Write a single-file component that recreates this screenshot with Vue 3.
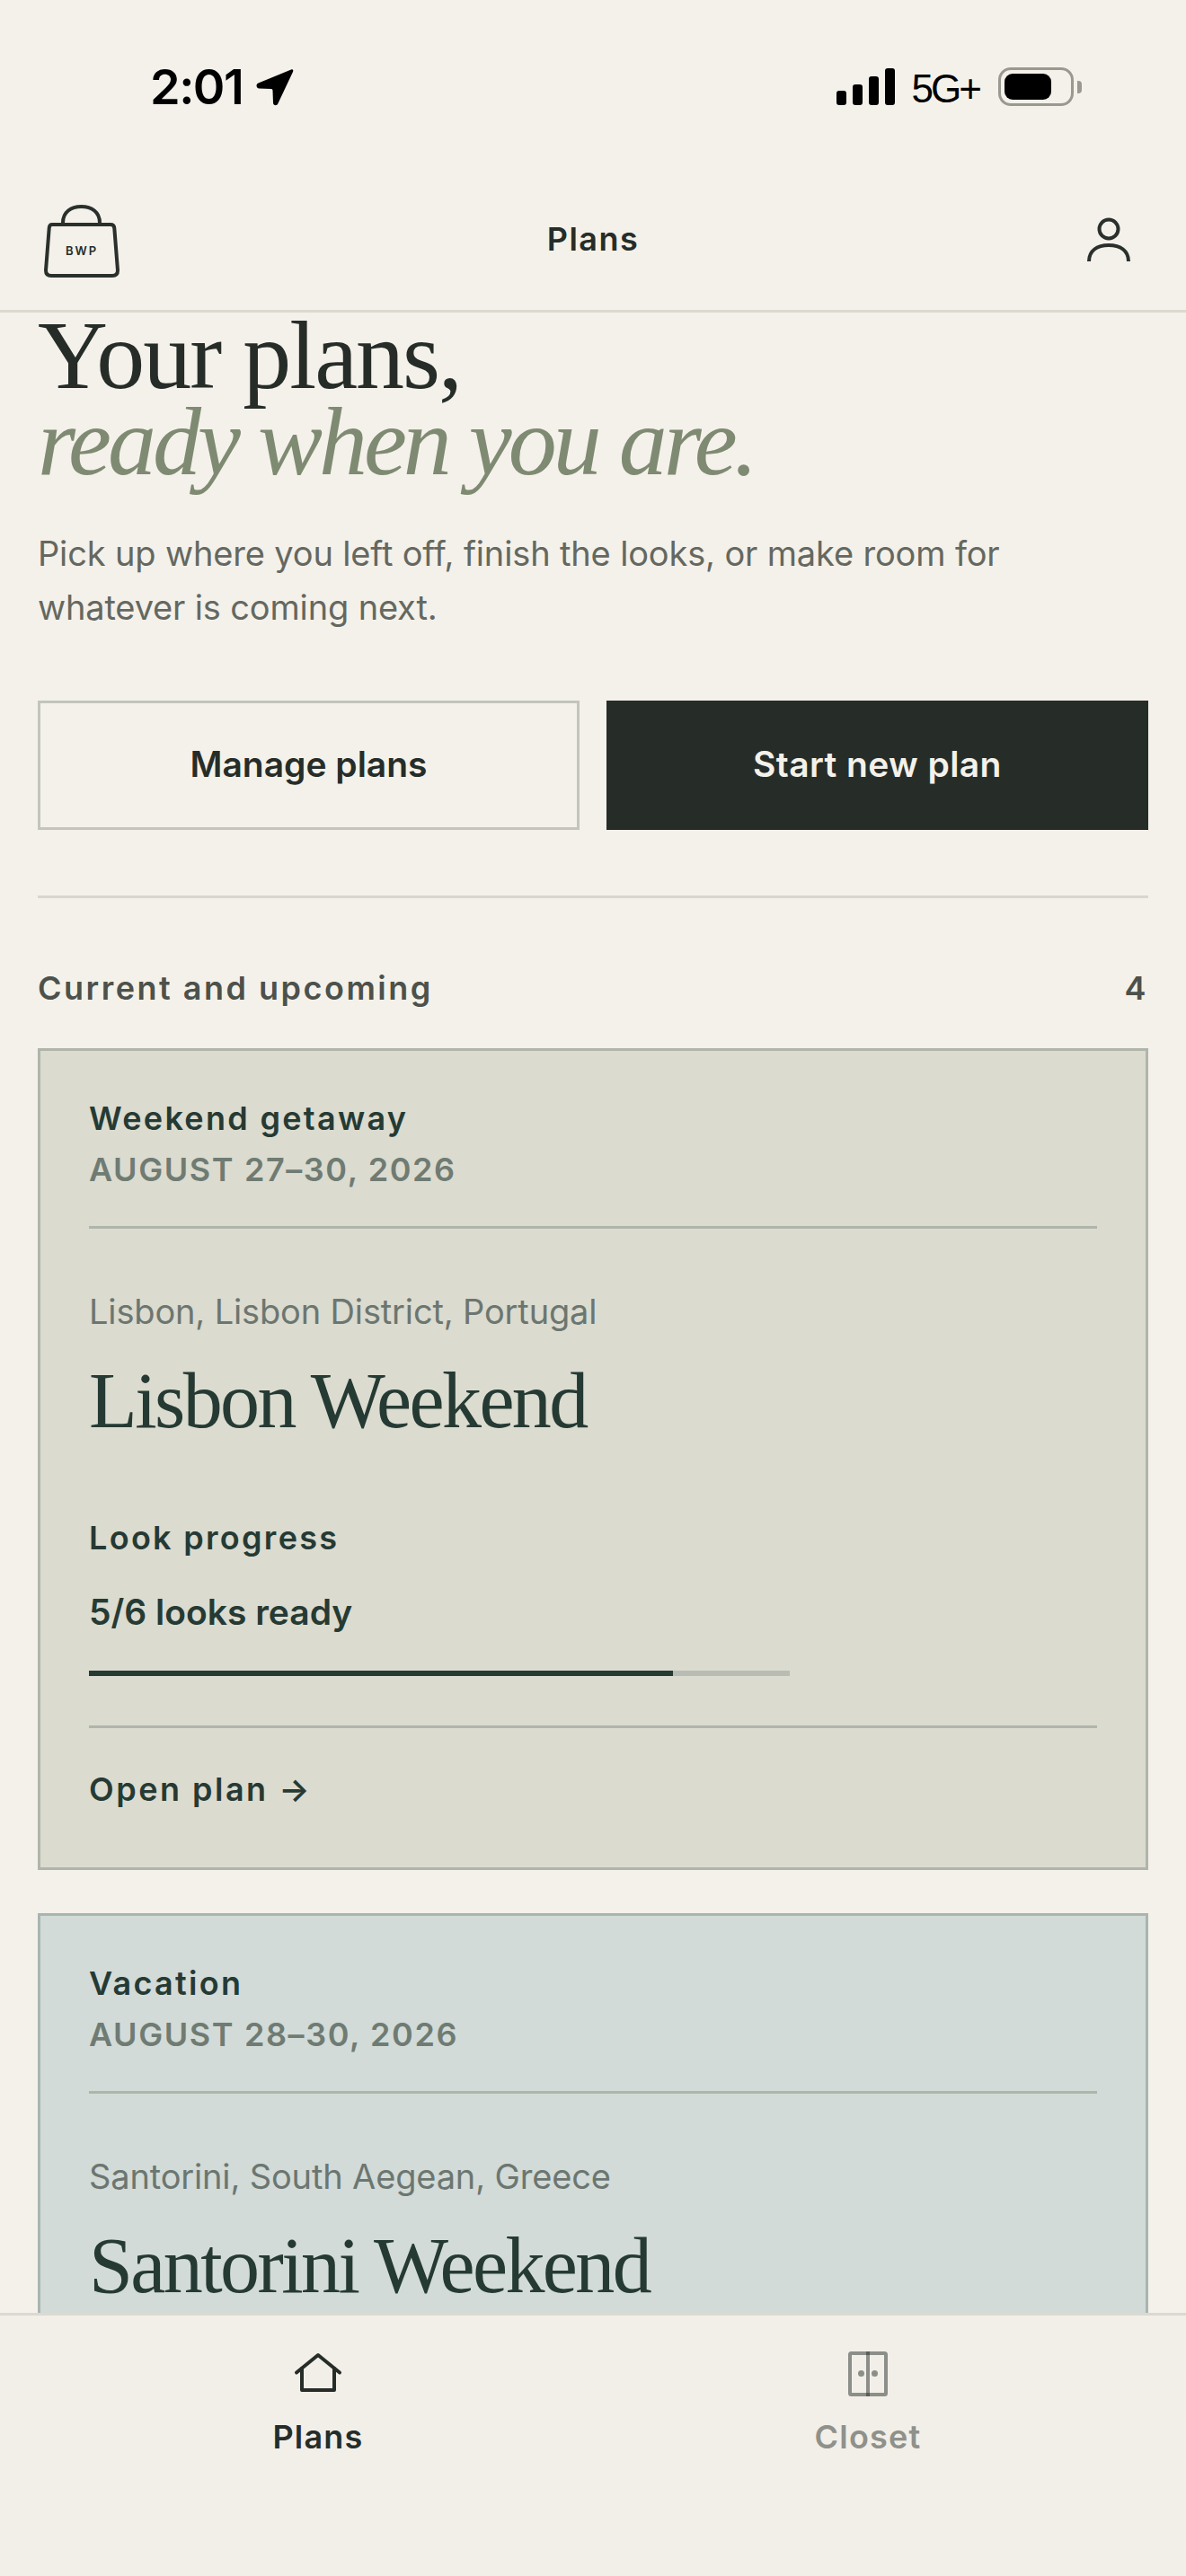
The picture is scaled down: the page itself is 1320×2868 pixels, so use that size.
<template>
  <div class="screen">
    <div class="status-bar">
      <div class="status-left">
        <span class="clock">2:01</span>
        <svg class="location" width="42" height="42" viewBox="0 0 42 42">
          <path d="M39 1.500 2.500 16.500C-.5 18 0 22 3.500 22.500L17 23C18 23 18.500 24 18.500 25L19 38.500C19.200 42 23.500 42 24.500 39L41 4C42 2 40.500 .8 39 1.500Z" fill="#000" />
        </svg>
      </div>
      <div class="status-right">
        <div class="signal">
          <span v-for="h in signalBars" :key="h" class="signal-bar" :style="{ height: h + 'px' }"></span>
        </div>
        <span class="network">5G+</span>
        <div class="battery">
          <div class="battery-body"><div class="battery-fill"></div></div>
          <div class="battery-cap"></div>
        </div>
      </div>
    </div>

    <header class="top-bar">
      <div class="bag">
        <svg width="84" height="81" viewBox="0 0 84 81" fill="none" stroke="#2a302c" stroke-width="4">
          <path d="M21 23V20C21 8 30 2 41.500 2S62 8 62 20V23" />
          <path d="M9 22H74Q78 22 78.300 26L82 73Q82 79 76 79H8Q2 79 2 73L5.700 26Q6 22 9 22Z" stroke-linejoin="round" />
        </svg>
        <span class="bag-label">BWP</span>
      </div>
      <span class="top-title">Plans</span>
      <svg class="profile" width="48" height="50" viewBox="0 0 48 50" fill="none" stroke="#2a302c" stroke-width="4">
        <circle cx="24" cy="13" r="10.500" />
        <path d="M2 49C2 37 11 31 24 31S46 37 46 49" />
      </svg>
    </header>

    <main class="content">
      <h1 class="hero">
        <span class="hero-line">Your plans,</span>
        <em class="hero-line hero-accent">ready when you are.</em>
      </h1>
      <p class="lead">Pick up where you left off, finish the looks, or make room for whatever is coming next.</p>

      <div class="actions">
        <button class="btn btn-outline">Manage plans</button>
        <button class="btn btn-solid">Start new plan</button>
      </div>

      <div class="section-head">
        <span>Current and upcoming</span>
        <span>{{ planCount }}</span>
      </div>

      <div class="plan-list">
        <article v-for="plan in plans" :key="plan.title" class="plan" :class="plan.tone">
          <div class="plan-kicker">{{ plan.kind }}</div>
          <div class="plan-date">{{ plan.date }}</div>
          <div class="plan-rule"></div>
          <div class="plan-place">{{ plan.place }}</div>
          <h2 class="plan-title">{{ plan.title }}</h2>
          <template v-if="plan.total">
            <div class="plan-kicker progress-label">Look progress</div>
            <div class="progress-count">{{ plan.ready }}/{{ plan.total }} looks ready</div>
            <div class="progress-track">
              <div class="progress-fill" :style="{ width: (plan.ready / plan.total) * 100 + '%' }"></div>
            </div>
            <div class="plan-rule rule-low"></div>
            <div class="plan-link">Open plan →</div>
          </template>
        </article>
      </div>
    </main>

    <nav class="tabs">
      <div class="tab tab-active">
        <svg width="72" height="72" viewBox="0 0 72 72" fill="none" stroke="#262d29" stroke-width="4" stroke-linecap="round" stroke-linejoin="round">
          <path d="M12 35.500 36 16l24 19.500" />
          <path d="M18 31V55H54V31" />
        </svg>
        <span>Plans</span>
      </div>
      <div class="tab">
        <svg width="72" height="72" viewBox="0 0 72 72" fill="none" stroke="#262d29" stroke-opacity=".5" stroke-width="4">
          <rect x="16" y="14" width="40" height="46" rx="1.500" />
          <path d="M36 12V62" />
          <circle cx="28.500" cy="36.500" r="3.500" fill="#262d29" fill-opacity=".5" stroke="none" />
          <circle cx="43.500" cy="36.500" r="3.500" fill="#262d29" fill-opacity=".5" stroke="none" />
        </svg>
        <span>Closet</span>
      </div>
    </nav>
  </div>
</template>

<script setup>
const signalBars = [16, 23, 32, 41]
const planCount = 4

const plans = [
  {
    kind: 'Weekend getaway',
    date: 'AUGUST 27–30, 2026',
    place: 'Lisbon, Lisbon District, Portugal',
    title: 'Lisbon Weekend',
    ready: 5,
    total: 6,
    tone: 'tone-sand',
  },
  {
    kind: 'Vacation',
    date: 'AUGUST 28–30, 2026',
    place: 'Santorini, South Aegean, Greece',
    title: 'Santorini Weekend',
    tone: 'tone-sea',
  },
]
</script>

<style>
html,
body {
  margin: 0;
  background: #f4f1ea;
}
</style>

<style scoped>
.screen {
  width: 1320px;
  height: 2868px;
  display: flex;
  flex-direction: column;
  overflow: hidden;
  background: #f4f1ea;
  color: #262d29;
  font-family: Inter, "Liberation Sans", sans-serif;
}

.status-bar {
  height: 200px;
  flex: none;
  box-sizing: border-box;
  padding: 75px 116px 0 167px;
  display: flex;
  justify-content: space-between;
  align-items: flex-start;
  color: #000;
}

.status-left {
  display: flex;
  align-items: center;
  height: 43px;
}

.clock {
  font-size: 54px;
  line-height: 43px;
  font-weight: 600;
  letter-spacing: -1.500px;
}

.location {
  margin-left: 15px;
}

.status-right {
  display: flex;
  align-items: center;
  height: 43px;
}

.signal {
  display: flex;
  align-items: flex-end;
  gap: 7.500px;
  height: 41px;
}

.signal-bar {
  width: 10.500px;
  background: #000;
  border-radius: 3px;
}

.network {
  margin-left: 19px;
  font-family: "Liberation Sans", sans-serif;
  font-size: 44px;
  line-height: 43px;
  letter-spacing: -3px;
  position: relative;
  top: 2px;
}

.battery {
  margin-left: 21px;
  display: flex;
  align-items: center;
  gap: 4px;
}

.battery-body {
  width: 84px;
  height: 43px;
  box-sizing: border-box;
  border: 3.500px solid #999990;
  border-radius: 14px;
  padding: 3.500px;
}

.battery-fill {
  width: 52px;
  height: 29px;
  background: #000;
  border-radius: 9px;
}

.battery-cap {
  width: 5px;
  height: 14px;
  background: #999990;
  border-radius: 0 4px 4px 0;
}

.top-bar {
  height: 148px;
  flex: none;
  box-sizing: border-box;
  border-bottom: 3px solid #dcd9d1;
  padding: 0 62px 0 49px;
  display: flex;
  justify-content: space-between;
  position: relative;
}

.bag {
  position: relative;
  width: 84px;
  height: 81px;
  margin-top: 28px;
}

.bag svg {
  display: block;
}

.bag-label {
  position: absolute;
  left: 0;
  right: 0;
  top: 43px;
  text-align: center;
  font-size: 13px;
  line-height: 16px;
  font-weight: 600;
  letter-spacing: 2px;
}

.top-title {
  position: absolute;
  left: 0;
  right: 0;
  top: 46px;
  text-align: center;
  font-size: 36px;
  line-height: 40px;
  font-weight: 600;
  letter-spacing: 1.500px;
}

.profile {
  margin-top: 42px;
}

.content {
  flex: 1;
  min-height: 0;
  overflow: hidden;
  padding: 0 42px;
}

.hero {
  margin: 0;
  font-family: "Liberation Serif", serif;
  font-weight: 400;
  font-size: 108px;
  line-height: 96px;
}

.hero-line {
  display: block;
  letter-spacing: -2px;
}

.hero-accent {
  color: #7f8a72;
  letter-spacing: -4px;
}

.lead {
  margin: 46px 0 0;
  font-size: 38px;
  line-height: 60px;
  letter-spacing: -.15px;
  color: #646860;
}

.actions {
  margin-top: 74px;
  padding-bottom: 73px;
  border-bottom: 3px solid #d9d6ce;
  display: grid;
  grid-template-columns: 1fr 1fr;
  gap: 30px;
}

.btn {
  height: 144px;
  box-sizing: border-box;
  border: 3px solid #c3c5bc;
  background: transparent;
  color: #262d29;
  font-family: inherit;
  font-size: 39px;
  font-weight: 600;
  padding: 0 0 3px;
}

.btn-solid {
  background: #262d29;
  border-color: #262d29;
  color: #f4f1ea;
  letter-spacing: .4px;
}

.section-head {
  margin-top: 76px;
  display: flex;
  justify-content: space-between;
  font-size: 36px;
  line-height: 48px;
  font-weight: 600;
  letter-spacing: 2.500px;
  color: #4c514c;
}

.plan-list {
  margin-top: 43px;
  display: flex;
  flex-direction: column;
  gap: 48px;
}

.plan {
  border: 3px solid #b0b5ab;
  padding: 51px 54px 63px;
  color: #263a34;
}

.tone-sand {
  background: #dbdbcf;
}

.tone-sea {
  background: #d2dbd8;
  border-color: #a9b5b1;
}

.plan-kicker {
  font-size: 36px;
  line-height: 48px;
  font-weight: 600;
  letter-spacing: 2.300px;
}

.plan-date {
  margin-top: 9px;
  font-size: 36px;
  line-height: 48px;
  font-weight: 600;
  letter-spacing: 1.600px;
  color: #6f7b73;
}

.plan-rule {
  margin-top: 39px;
  height: 3px;
  background: #b0b5ab;
}

.plan-place {
  margin-top: 65px;
  font-size: 38px;
  line-height: 54px;
  letter-spacing: -.15px;
  color: #6c7670;
}

.plan-title {
  margin: 23px 0 0;
  font-family: "Liberation Serif", serif;
  font-weight: 400;
  font-size: 88px;
  line-height: 100px;
  letter-spacing: -2.600px;
}

.progress-label {
  margin-top: 78px;
}

.progress-count {
  margin-top: 32px;
  font-size: 39px;
  line-height: 54px;
  font-weight: 600;
}

.progress-track {
  margin-top: 38px;
  width: 780px;
  height: 6px;
  background: #b9bcb2;
}

.progress-fill {
  height: 100%;
  background: #263a34;
}

.rule-low {
  margin-top: 55px;
}

.plan-link {
  margin-top: 44px;
  font-size: 36px;
  line-height: 48px;
  font-weight: 600;
  letter-spacing: 2.500px;
}

.tabs {
  height: 293px;
  flex: none;
  box-sizing: border-box;
  border-top: 3px solid #dcd9d1;
  background: #f2efe8;
  padding: 28px 48px 0;
  display: grid;
  grid-template-columns: 1fr 1fr;
}

.tab {
  display: flex;
  flex-direction: column;
  align-items: center;
  font-size: 36px;
  line-height: 48px;
  font-weight: 600;
  letter-spacing: 1.200px;
  color: #8f918a;
}

.tab svg {
  display: block;
  margin-bottom: 11px;
}

.tab-active {
  color: #262d29;
}
</style>
